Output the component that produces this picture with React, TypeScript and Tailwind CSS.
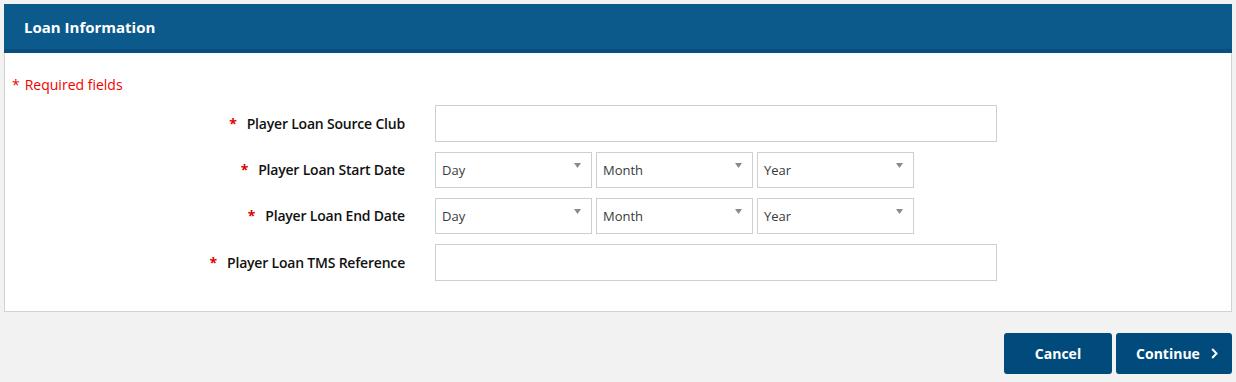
import React from "react";

function Tri() {
  return (
    <svg width="7" height="5" viewBox="0 0 7 5" className="mt-[10px] mr-[10px] shrink-0">
      <path d="M0 0 L7 0 L3.5 5 Z" fill="#8a8a8a" />
    </svg>
  );
}

function Select({ label }: { label: string }) {
  return (
    <div className="flex h-[36px] w-[157px] items-start justify-between border border-[#cfcfcf] bg-white">
      <span className="self-center pl-[6px] pt-[1px] text-[13px] text-[#3a3a3a]">{label}</span>
      <Tri />
    </div>
  );
}

function Label({ text }: { text: string }) {
  return (
    <div className="flex items-center justify-end pr-[30px] pb-[1px] text-[14px] font-semibold tracking-[-0.2px] text-[#111]">
      <span className="mr-[10px] font-bold text-[#e00000]">*</span>
      <span>{text}</span>
    </div>
  );
}

function DateRow() {
  return (
    <div className="flex gap-[4px]">
      <Select label="Day" />
      <Select label="Month" />
      <Select label="Year" />
    </div>
  );
}

export default function App() {
  return (
    <div className="min-h-screen bg-[#f2f2f2] p-[4px] font-['Open_Sans',sans-serif]">
      <div className="flex h-[49px] items-start border-b-[4px] border-[#07507e] bg-[#0b5a8b] pl-[20px] pt-[13px]">
        <span className="text-[15px] font-bold leading-[20px] text-white">Loan Information</span>
      </div>
      <div className="border-x border-b border-[#d2d2d2] bg-white pb-[30px] pt-[22px]">
        <div className="pl-[7px] text-[14px] leading-[20px] text-[#f00000]">
          <span className="mr-[5px]">*</span>Required fields
        </div>
        <div className="mt-[10px] grid grid-cols-[430px_1fr] gap-y-[10px]">
          <Label text="Player Loan Source Club" />
          <div className="h-[37px] w-[562px] border border-[#cfcfcf] bg-white" />
          <Label text="Player Loan Start Date" />
          <DateRow />
          <Label text="Player Loan End Date" />
          <DateRow />
          <Label text="Player Loan TMS Reference" />
          <div className="h-[37px] w-[562px] border border-[#cfcfcf] bg-white" />
        </div>
      </div>
      <div className="mt-[21px] flex justify-end gap-[4px]">
        <button className="flex h-[41px] w-[108px] items-center justify-center rounded-[3px] bg-[#004b7c] text-[14px] font-bold text-white">
          Cancel
        </button>
        <button className="flex h-[41px] w-[116px] items-center justify-center gap-[11px] rounded-[3px] bg-[#004b7c] pl-[6px] text-[14px] font-bold text-white">
          Continue
          <svg width="7" height="11" viewBox="0 0 7 11">
            <path d="M1.2 1 L5.5 5.5 L1.2 10" stroke="white" strokeWidth="2" fill="none" />
          </svg>
        </button>
      </div>
    </div>
  );
}
